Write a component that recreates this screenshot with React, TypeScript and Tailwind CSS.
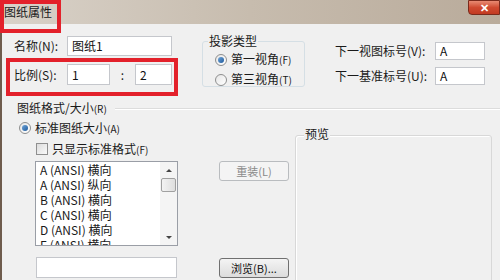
import React from "react";

const font = { fontFamily: '"Noto Sans CJK SC", "Noto Sans", sans-serif' };

function Radio({ checked }: { checked?: boolean }) {
  return (
    <span className="flex h-[12px] w-[12px] shrink-0 items-center justify-center rounded-full border border-[#8e8f8f] bg-gradient-to-br from-[#e6e6e6] to-[#ffffff]">
      {checked && (
        <span className="h-[6px] w-[6px] rounded-full bg-gradient-to-br from-[#6fa5d8] to-[#1c5a9c]" />
      )}
    </span>
  );
}

function TextBox({ value, className }: { value?: string; className: string }) {
  return (
    <div
      className={`flex items-center border border-[#c5c7cc] bg-white pl-[4px] text-[12px] text-[#111] ${className}`}
    >
      {value}
    </div>
  );
}

function Button({ label, disabled }: { label: string; disabled?: boolean }) {
  return (
    <div
      className={`flex h-[20px] w-[70px] items-center justify-center rounded-[3px] border text-[11px] ${
        disabled
          ? "border-[#b9bcbf] bg-[#f4f4f4] text-[#8a8a8a]"
          : "border-[#707070] bg-gradient-to-b from-[#f4f4f4] to-[#dcdcdc] text-[#111]"
      }`}
    >
      {label}
    </div>
  );
}

const sizes = [
  "A (ANSI) 横向",
  "A (ANSI) 纵向",
  "B (ANSI) 横向",
  "C (ANSI) 横向",
  "D (ANSI) 横向",
  "E (ANSI) 横向",
];

export default function App() {
  return (
    <div
      className="relative h-[280px] w-[500px] overflow-hidden bg-[#f0f0f0] text-[#1a1a1a]"
      style={font}
    >
      {/* Title bar */}
      <div className="flex h-[24px] items-start justify-between bg-gradient-to-r from-[#d9d2c9] via-[#c7bcae] to-[#b9ab9b]">
        <span className="pl-[4px] pt-[4px] text-[12px] leading-[16px] text-[#1a1a1a]">
          图纸属性
        </span>
        <div className="flex h-[15px] w-[32px] items-center justify-center rounded-bl-[4px] border border-[#7a2a1c] bg-gradient-to-b from-[#e88a72] via-[#cf4a30] to-[#c23a22] text-[11px] font-bold leading-none text-white">
          ✕
        </div>
      </div>

      {/* Body */}
      <div className="h-[256px] border-l-2 border-[#6e5c4d]">
        {/* Top section */}
        <div className="flex items-start pl-[12px] pt-[12px]">
          <div className="flex w-[158px] flex-col gap-[8px]">
            <div className="flex items-center">
              <span className="w-[53px] text-[12px]">名称(N):</span>
              <TextBox value="图纸1" className="h-[20px] w-[105px]" />
            </div>
            <div className="flex items-center">
              <span className="w-[53px] text-[12px]">比例(S):</span>
              <TextBox value="1" className="h-[21px] w-[43px]" />
              <span className="w-[25px] text-center text-[12px]">:</span>
              <TextBox value="2" className="h-[21px] w-[37px]" />
            </div>
          </div>

          <div className="relative ml-[30px] mt-[5px] h-[46px] w-[103px] rounded-[3px] border border-[#d5dfe5]">
            <span className="absolute left-[5px] top-[-9px] bg-[#f0f0f0] px-[1px] text-[12px] leading-[16px]">
              投影类型
            </span>
            <div className="flex flex-col gap-[5px] pl-[12px] pt-[10px]">
              <div className="flex items-center gap-[4px] text-[12px] leading-[14px]">
                <Radio checked />
                <span>
                  第一视角<span className="text-[10px]">(F)</span>
                </span>
              </div>
              <div className="flex items-center gap-[4px] text-[12px] leading-[14px]">
                <Radio />
                <span>
                  第三视角<span className="text-[10px]">(T)</span>
                </span>
              </div>
            </div>
          </div>

          <div className="ml-[30px] mt-[6px] flex flex-col gap-[7px]">
            <div className="flex items-center">
              <span className="w-[100px] text-[12px]">下一视图标号(V):</span>
              <TextBox value="A" className="h-[18px] w-[50px]" />
            </div>
            <div className="flex items-center">
              <span className="w-[100px] text-[12px]">下一基准标号(U):</span>
              <TextBox value="A" className="h-[18px] w-[50px]" />
            </div>
          </div>
        </div>

        {/* Separator */}
        <div className="mt-[14px] flex h-[14px] items-center pl-[15px]">
          <span className="text-[12px] leading-[14px]">
            图纸格式/大小<span className="text-[10px]">(R)</span>
          </span>
          <div className="ml-[8px] mt-[2px] flex-1 border-t border-b border-t-[#dcdcdc] border-b-white" />
        </div>

        {/* Bottom section */}
        <div className="flex items-start pl-[17px]">
          <div className="flex w-[159px] flex-col">
            <div className="mt-[6px] flex h-[14px] items-center gap-[4px] text-[12px]">
              <Radio checked />
              <span>
                标准图纸大小<span className="text-[10px]">(A)</span>
              </span>
            </div>
            <div className="ml-[17px] mt-[7px] flex h-[14px] items-center gap-[4px] text-[12px]">
              <span className="h-[12px] w-[12px] shrink-0 border border-[#8f8f8f] bg-gradient-to-br from-[#dcdcdc] to-[#fafafa]" />
              <span>
                只显示标准格式<span className="text-[10px]">(F)</span>
              </span>
            </div>
            <div className="ml-[16px] mt-[5px] flex h-[85px] w-[143px] overflow-hidden border border-[#9a9ea6] bg-white">
              <div className="flex-1 pl-[4px]">
                {sizes.map((s) => (
                  <div key={s} className="h-[15px] text-[12px] leading-[15px] whitespace-nowrap">
                    {s}
                  </div>
                ))}
              </div>
              <div className="flex w-[17px] flex-col bg-[#f4f4f4]">
                <div className="flex h-[16px] items-center justify-center">
                  <span className="h-0 w-0 border-x-[3px] border-b-[3px] border-x-transparent border-b-[#444]" />
                </div>
                <div className="mx-[1px] h-[14px] rounded-[2px] border border-[#a0a0a0] bg-gradient-to-r from-[#f3f3f3] to-[#dedede]" />
                <div className="flex-1" />
                <div className="flex h-[16px] items-center justify-center">
                  <span className="h-0 w-0 border-x-[3px] border-t-[3px] border-x-transparent border-t-[#444]" />
                </div>
              </div>
            </div>
            <TextBox className="ml-[17px] mt-[11px] h-[21px] w-[141px]" />
          </div>

          <div className="ml-[41px] mt-[46px] flex flex-col gap-[77px]">
            <Button label="重装(L)" disabled />
            <Button label="浏览(B)..." />
          </div>

          <div className="relative ml-[6px] mt-[20px] h-[160px] w-[197px] rounded-[3px] border border-[#d8d8d8] shadow-[inset_1px_1px_0_#ffffff]">
            <span className="absolute left-[8px] top-[-10px] bg-[#f0f0f0] px-[1px] text-[12px] leading-[16px]">
              预览
            </span>
          </div>
        </div>
      </div>

      {/* Red annotation boxes */}
      <div className="absolute left-0 top-0 h-[33px] w-[61px] border-[4px] border-[#e3212b]" />
      <div className="absolute left-[6px] top-[58px] h-[38px] w-[172px] border-[4px] border-[#e3212b]" />
    </div>
  );
}
